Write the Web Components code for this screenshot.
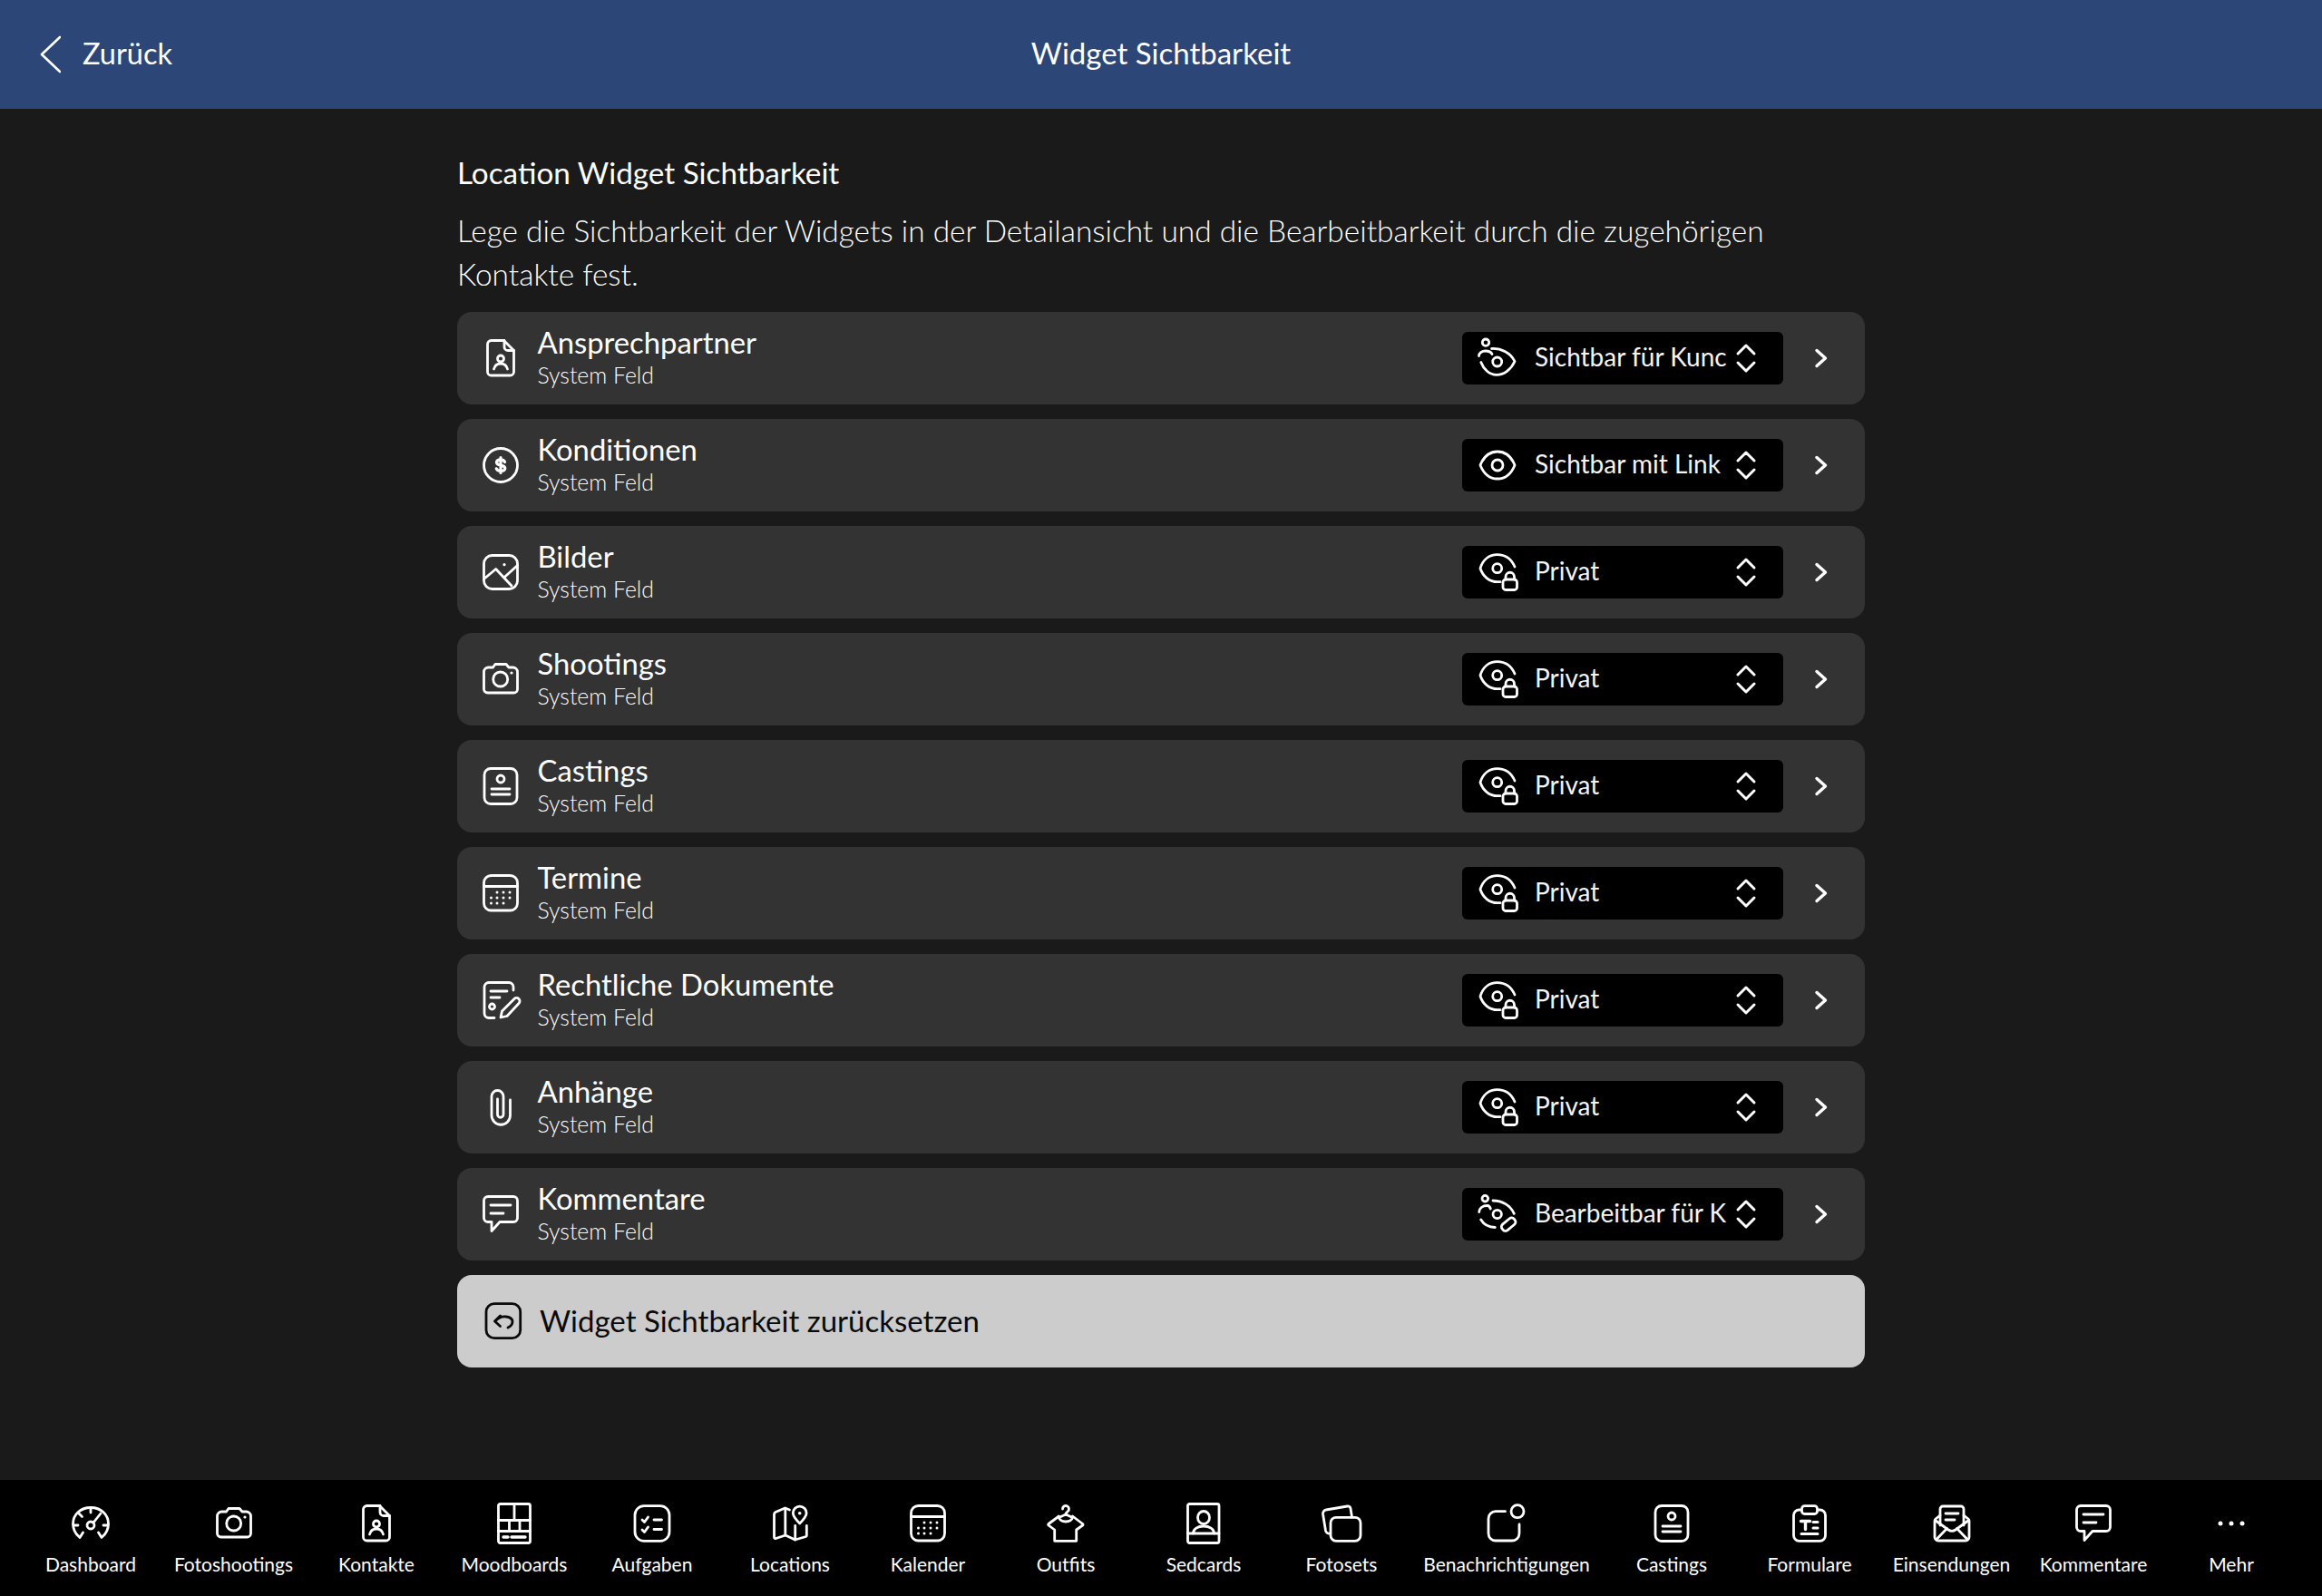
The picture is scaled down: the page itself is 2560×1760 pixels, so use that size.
<!DOCTYPE html>
<html lang="de"><head><meta charset="utf-8"><title>Widget Sichtbarkeit</title>
<style>
html,body{margin:0;padding:0;height:100%;background:#1a1a1a;color:#fff;font-family:Lato,"Noto Sans",sans-serif}
</style></head><body>
<app-shell>
  <app-header slot="header" back="Zurück" title-text="Widget Sichtbarkeit"></app-header>
  <widget-intro heading="Location Widget Sichtbarkeit">Lege die Sichtbarkeit der Widgets in der Detailansicht und die Bearbeitbarkeit durch die zugehörigen Kontakte fest.</widget-intro>
  <widget-row icon="person-file" label="Ansprechpartner" vis="eye-person" value="Sichtbar für Kunc"></widget-row>
  <widget-row icon="dollar" label="Konditionen" vis="eye" value="Sichtbar mit Link"></widget-row>
  <widget-row icon="image" label="Bilder" vis="eye-lock" value="Privat"></widget-row>
  <widget-row icon="camera" label="Shootings" vis="eye-lock" value="Privat"></widget-row>
  <widget-row icon="casting" label="Castings" vis="eye-lock" value="Privat"></widget-row>
  <widget-row icon="calendar" label="Termine" vis="eye-lock" value="Privat"></widget-row>
  <widget-row icon="legal" label="Rechtliche Dokumente" vis="eye-lock" value="Privat"></widget-row>
  <widget-row icon="clip" label="Anhänge" vis="eye-lock" value="Privat"></widget-row>
  <widget-row icon="comment" label="Kommentare" vis="eye-person-pen" value="Bearbeitbar für K"></widget-row>
  <reset-button icon="undo">Widget Sichtbarkeit zurücksetzen</reset-button>
  <bottom-nav slot="nav">
    <nav-item icon="gauge" w="152">Dashboard</nav-item>
    <nav-item icon="camera" w="163">Fotoshootings</nav-item>
    <nav-item icon="person-file" w="152">Kontakte</nav-item>
    <nav-item icon="moodboard" w="152">Moodboards</nav-item>
    <nav-item icon="tasks" w="152">Aufgaben</nav-item>
    <nav-item icon="map" w="152">Locations</nav-item>
    <nav-item icon="calendar" w="152">Kalender</nav-item>
    <nav-item icon="shirt" w="152">Outfits</nav-item>
    <nav-item icon="sedcard" w="152">Sedcards</nav-item>
    <nav-item icon="photos" w="152">Fotosets</nav-item>
    <nav-item icon="notify" w="212">Benachrichtigungen</nav-item>
    <nav-item icon="casting" w="152">Castings</nav-item>
    <nav-item icon="form" w="152">Formulare</nav-item>
    <nav-item icon="mail" w="161">Einsendungen</nav-item>
    <nav-item icon="comment" w="152">Kommentare</nav-item>
    <nav-item icon="more" w="152">Mehr</nav-item>
  </bottom-nav>
</app-shell>
<script>
const dots=(rows)=>rows.map(([y,xs])=>xs.map(x=>`<circle cx="${x}" cy="${y}" r="1.5" fill="currentColor" stroke="none"/>`).join('')).join('');
const ICONS={
'person-file':'<path d="M13.5 4.5H27.5L38.5 15.5V39a4 4 0 0 1-4 4H13.5a4 4 0 0 1-4-4V8.500a4 4 0 0 1 4-4z"/><path d="M28 4.500v7a4 4 0 0 0 4 4h6.500"/><circle cx="24" cy="24.500" r="3.500"/><path d="M16.500 36c1-4 4-6 7.500-6s6.500 2 7.500 6"/>',
dollar:'<circle cx="24" cy="24" r="18.500"/><path stroke-width="3.200" d="M28.500 20.500c-.6-1.700-2.200-2.700-4.500-2.700-2.700 0-4.500 1.300-4.500 3.200 0 4.300 9.300 2 9.300 6.300 0 2-1.900 3.200-4.700 3.200-2.400 0-4.200-1-4.800-2.700M24 15.500v17"/>',
image:'<rect x="5.500" y="5.500" width="37" height="37" rx="9"/><path d="M5.500 31.500L18.700 20.500 36 39"/><path d="M28.700 29L42.500 16.500"/><circle cx="28" cy="15.700" r="1.600" fill="currentColor" stroke="none"/>',
camera:'<path d="M5.500 16a5 5 0 0 1 5-5h5l2.500-3.500h12L33 11h4.500a5 5 0 0 1 5 5v19a4 4 0 0 1-4 4h-29a4 4 0 0 1-4-4z"/><circle cx="23.700" cy="24" r="8"/><circle cx="36" cy="17" r="1.600" fill="currentColor" stroke="none"/>',
casting:'<rect x="6" y="4.500" width="36" height="39" rx="7"/><circle cx="24" cy="16" r="4"/><path d="M14 27h20M14 33h20"/>',
calendar:'<rect x="5.500" y="4.500" width="37" height="38.500" rx="8"/><path d="M5.500 16.500h37"/>'+dots([[23,[20,27,34]],[29,[13.500,20,27,34]],[35,[13.500,20,27]]]),
legal:'<path d="M38 13V9.500a5 5 0 0 0-5-5H11a5 5 0 0 0-5 5v29a5 5 0 0 0 5 5h6"/><path d="M13 14h18M13 21h10"/><circle cx="14.500" cy="31" r="3"/><path d="M24 43l1.500-7L39 22.500a3.500 3.500 0 0 1 5 5L31 41.500z"/>',
clip:'<path d="M34.500 16V33a10.250 10.250 0 0 1-20.500 0V12a6.500 6.500 0 0 1 13 0V32a3.250 3.250 0 0 1-6.500 0V15"/>',
comment:'<path d="M10 4.500h28a4.500 4.500 0 0 1 4.500 4.500v19a4.500 4.500 0 0 1-4.500 4.500H23l-9 10v-10h-4a4.500 4.500 0 0 1-4.500-4.500V9a4.500 4.500 0 0 1 4.500-4.500z"/><path d="M13 14h22M13 23h14"/>',
undo:'<rect x="5" y="4.700" width="37.700" height="38" rx="9"/><path d="M20.500 18L14.500 24l6 5.500"/><path d="M15 24c3-3.500 7.500-5.500 12-5 4 .5 7 2.500 7 5.500 0 2.500-2 5-5 6.500"/>',
eye:'<path d="M5 24C9 14 16 9 24 9s15 5 19 15c-4 10-11 15-19 15S9 34 5 24z"/><circle cx="24" cy="24" r="6"/>',
'eye-person':'<circle cx="11" cy="6.700" r="3.700"/><circle cx="23.700" cy="28" r="5"/><path d="M17.500 13.500C28 13 38.500 18 43 27.500c-4 9-12 14.800-20 14.800C15 42.300 8.500 36 5.800 28.500"/><path d="M3.500 21.500c0-3 3-5.500 7.500-5.500 3 0 5.500 .8 7 3.500"/>',
'eye-lock':'<path d="M43 18C39 9 32 4.700 23.700 4.700 15 4.700 8 10 5 19.700c3 9 10 15 19 15h3"/><circle cx="23.700" cy="19.700" r="5"/><rect x="30" y="32" width="15.500" height="11.500" rx="3"/><path d="M33 32v-3a4.700 4.700 0 0 1 9.500 0v3"/>',
'eye-person-pen':'<circle cx="10.300" cy="6.700" r="3.300"/><circle cx="23.700" cy="24" r="4.700"/><path d="M19 9C29 9 38 14 42.300 23.300"/><path d="M5.700 30C9 35.500 14.500 38.300 21.300 38.500"/><path d="M3.700 21.500c0-4 3.500-7 9.300-7 1.500 0 2.700 1.500 3.300 3.500"/><rect x="27.500" y="31" width="17" height="8.500" rx="3.500" transform="rotate(-40 36 35)"/>',
gauge:'<path d="M12 39.500C7 35.500 4.500 30 4.500 24.500 4.500 14 13 6.500 24 6.500s19.500 7.500 19.500 18c0 5.500-2.500 11-7.500 15L32.500 34M12 39.500l3.500-5.500"/><path d="M24 7v5M11 13l3.500 3.500M5 26h5M38 26h5"/><circle cx="24" cy="26" r="4"/><path d="M27 23l8-10"/>',
moodboard:'<rect x="6.500" y="2.500" width="35" height="43" rx="2"/><path d="M24 2.500v18M6.500 20.500h35M6.500 32.500h35M18.500 20.500v12M30 20.500v12"/><path d="M12 39h5M21 39h15" stroke-width="3.400"/>',
tasks:'<rect x="5" y="4.700" width="38" height="38.600" rx="10"/><path d="M13 20l2.500 2.500 4-5.500M13 31l2.500 2.500 4-5.500M26 20h8.500M26 30.500h8.500"/>',
map:'<path d="M23.500 9L18.500 7 8 11.500a2.500 2.500 0 0 0-1.500 2.300V39a1.500 1.500 0 0 0 2 1.500L19 37l10.500 5 12-3.500a1 1 0 0 0 .8-1V26.500"/><path d="M18.800 7.500V37M29.700 26.500V42"/><path d="M34.700 24c-4-4-7.400-7.500-7.400-11.500a7.400 7.400 0 0 1 14.800 0c0 4-3.400 7.500-7.400 11.500z"/><circle cx="34.700" cy="12.800" r="1.800" fill="currentColor" stroke="none"/>',
shirt:'<path d="M20.500 8a3.500 3.500 0 1 1 5.800 2.600c-1.300 1-2.300 1.800-2.300 3.400"/><path d="M24 14l-7.500 3.500c1 3 4 4.500 7.500 4.500s6.500-1.500 7.500-4.500z"/><path d="M16.500 16L5 24.500a1 1 0 0 0 0 1.500l6.700 5V43.300H35.700V31l7-5a1 1 0 0 0 0-1.500L31.500 16"/>',
sedcard:'<rect x="6.500" y="2.500" width="34.500" height="43" rx="2"/><path d="M6.500 35h34.500"/><ellipse cx="24" cy="17.500" rx="6.500" ry="7"/><path d="M12.500 35c0-5 5-8 11.500-8s11.500 3 11.500 8"/>',
photos:'<rect x="12" y="17.300" width="33" height="26" rx="6"/><path d="M35.500 17L34 7.500a3 3 0 0 0-3.500-2.500L7 9a4 4 0 0 0-3.500 4.500L6.500 32a4 4 0 0 0 5 3"/>',
notify:'<path d="M22.500 10.700H12a8 8 0 0 0-8 8V35a8 8 0 0 0 8 8H30a8 8 0 0 0 8-8V25"/><circle cx="36" cy="10.700" r="7"/>',
form:'<rect x="6.500" y="9" width="35" height="34.300" rx="6"/><rect x="15.500" y="4.700" width="17" height="8.800" rx="3" fill="#000"/><path d="M14.500 21.500h10M19.500 21.500v9" stroke-width="3.400"/><path d="M28 22.500h5M28 29h5M15 35.500h18" stroke-width="3"/>',
mail:'<path d="M11 15l-5 4a3 3 0 0 0-1 2.500V39a4 4 0 0 0 4 4H39a4 4 0 0 0 4-4V21.500a3 3 0 0 0-1-2.500l-5-4"/><path d="M11 26V8a3 3 0 0 1 3-3H34a3 3 0 0 1 3 3V26"/><path d="M17 13h14M17 20h10"/><path d="M5.500 20.500L20 31a7 7 0 0 0 8 0L42.500 20.500"/><path d="M7 41.500L18.500 29.500M41 41.500L29.500 29.500"/>',
more:'<circle cx="12" cy="24" r="2.500" fill="currentColor" stroke="none"/><circle cx="24" cy="24" r="2.500" fill="currentColor" stroke="none"/><circle cx="36" cy="24" r="2.500" fill="currentColor" stroke="none"/>'
};
class AppIcon extends HTMLElement{
  connectedCallback(){
    if(this.shadowRoot)return;
    this.attachShadow({mode:'open'}).innerHTML=`<style>:host{display:block;width:48px;height:48px;flex:none}svg{display:block;width:48px;height:48px;overflow:visible;fill:none;stroke:currentColor;stroke-width:2.8;stroke-linecap:round;stroke-linejoin:round}</style><svg viewBox="0 0 48 48" aria-hidden="true">${ICONS[this.getAttribute('name')]||''}</svg>`;
  }
}
customElements.define('app-icon',AppIcon);
class AppShell extends HTMLElement{
  constructor(){super();this.attachShadow({mode:'open'}).innerHTML=`<style>
  :host{display:flex;flex-direction:column;height:1760px;background:#1a1a1a;color:#fff}
  main{flex:1;display:flex;flex-direction:column;align-items:center;min-height:0}
  .col{width:1552px;display:flex;flex-direction:column;gap:16px}
  </style><slot name="header"></slot><main><div class="col"><slot></slot></div></main><slot name="nav"></slot>`;}
}
customElements.define('app-shell',AppShell);
class AppHeader extends HTMLElement{
  connectedCallback(){ if(this.shadowRoot)return;
    this.attachShadow({mode:'open'}).innerHTML=`<style>
    :host{display:grid;grid-template-columns:1fr auto 1fr;align-items:center;height:120px;background:#2c4678;color:#fff;font-size:33px;font-weight:400}
    .back{display:flex;align-items:center;gap:24px;padding-left:43px;font-size:32.5px}
    svg{width:24px;height:42px;fill:none;stroke:#fff;stroke-width:2.6;stroke-linecap:round;stroke-linejoin:round;display:block}
    span{position:relative;top:-2px}
    </style><div class="back"><svg viewBox="0 0 24 42"><path d="M23 2L3 21l20 19"/></svg><span>${this.getAttribute('back')}</span></div><span>${this.getAttribute('title-text')}</span><div></div>`;
  }
}
customElements.define('app-header',AppHeader);
class WidgetIntro extends HTMLElement{
  connectedCallback(){ if(this.shadowRoot)return;
    this.attachShadow({mode:'open'}).innerHTML=`<style>
    :host{display:block;padding-top:46px;padding-bottom:2px}
    h2{margin:0 0 16px;font-size:33.25px;font-weight:400;line-height:48px}
    p{margin:0;font-size:33.45px;font-weight:300;line-height:48px}
    </style><h2>${this.getAttribute('heading')}</h2><p><slot></slot></p>`;
  }
}
customElements.define('widget-intro',WidgetIntro);
class VisSelect extends HTMLElement{
  connectedCallback(){ if(this.shadowRoot)return;
    this.attachShadow({mode:'open'}).innerHTML=`<style>
    :host{display:flex;align-items:center;box-sizing:border-box;width:354px;height:58px;background:#000;border-radius:6px;padding:0 28px 0 15px;color:#fff}
    .t{margin-left:17px;width:211px;white-space:nowrap;font-size:28px;font-weight:400;color:#f4f4f4;line-height:54px;padding-bottom:4px}
    svg{margin-left:10px;flex:none;width:24px;height:36px;fill:none;stroke:#fff;stroke-width:3;stroke-linecap:round;stroke-linejoin:round;display:block}
    </style><app-icon name="${this.getAttribute('icon')}"></app-icon><span class="t">${this.getAttribute('value')}</span><svg viewBox="0 0 24 36"><path d="M3 13L12 4l9 9M3 23l9 9 9-9"/></svg>`;
  }
}
customElements.define('vis-select',VisSelect);
class WidgetRow extends HTMLElement{
  connectedCallback(){ if(this.shadowRoot)return;
    this.attachShadow({mode:'open'}).innerHTML=`<style>
    :host{display:flex;align-items:center;box-sizing:border-box;height:102px;background:#333;border-radius:16px;padding-left:24px;color:#fff}
    .txt{flex:1;margin-left:16.500px;display:flex;flex-direction:column;padding-bottom:2px}
    .a{font-size:32.8px;font-weight:400;line-height:40px}
    .b{font-size:24.8px;font-weight:300;line-height:32px;color:#fff}
    svg{width:16px;height:26px;margin:0 40px 0 34px;flex:none;fill:none;stroke:#fff;stroke-width:3.4;stroke-linecap:round;stroke-linejoin:round;display:block}
    </style><app-icon name="${this.getAttribute('icon')}"></app-icon><div class="txt"><div class="a">${this.getAttribute('label')}</div><div class="b">System Feld</div></div><vis-select icon="${this.getAttribute('vis')}" value="${this.getAttribute('value')}"></vis-select><svg viewBox="0 0 16 26"><path d="M3 4.500l9.500 8.500L3 21.500"/></svg>`;
  }
}
customElements.define('widget-row',WidgetRow);
class ResetButton extends HTMLElement{
  connectedCallback(){ if(this.shadowRoot)return;
    this.attachShadow({mode:'open'}).innerHTML=`<style>
    :host{display:flex;align-items:center;box-sizing:border-box;height:102px;background:#ccc;border-radius:16px;padding-left:27px;color:#0a0a0a;font-size:33px;font-weight:400;gap:16px}
    span{padding-bottom:3px}
    </style><app-icon name="${this.getAttribute('icon')}"></app-icon><span><slot></slot></span>`;
  }
}
customElements.define('reset-button',ResetButton);
class BottomNav extends HTMLElement{
  constructor(){super();this.attachShadow({mode:'open'}).innerHTML=`<style>
  :host{display:flex;height:128px;background:#000;padding:0 24px;box-sizing:border-box;color:#fff}
  </style><slot></slot>`;}
}
customElements.define('bottom-nav',BottomNav);
class NavItem extends HTMLElement{
  connectedCallback(){ if(this.shadowRoot)return;
    this.style.width=this.getAttribute('w')+'px';
    this.attachShadow({mode:'open'}).innerHTML=`<style>
    :host{display:flex;flex-direction:column;align-items:center;padding-top:24px;box-sizing:border-box;flex:none;font-size:21px;font-weight:400;white-space:nowrap}
    .l{line-height:28px;margin-top:7px}
    </style><app-icon name="${this.getAttribute('icon')}"></app-icon><div class="l"><slot></slot></div>`;
  }
}
customElements.define('nav-item',NavItem);
</script>
</body></html>
